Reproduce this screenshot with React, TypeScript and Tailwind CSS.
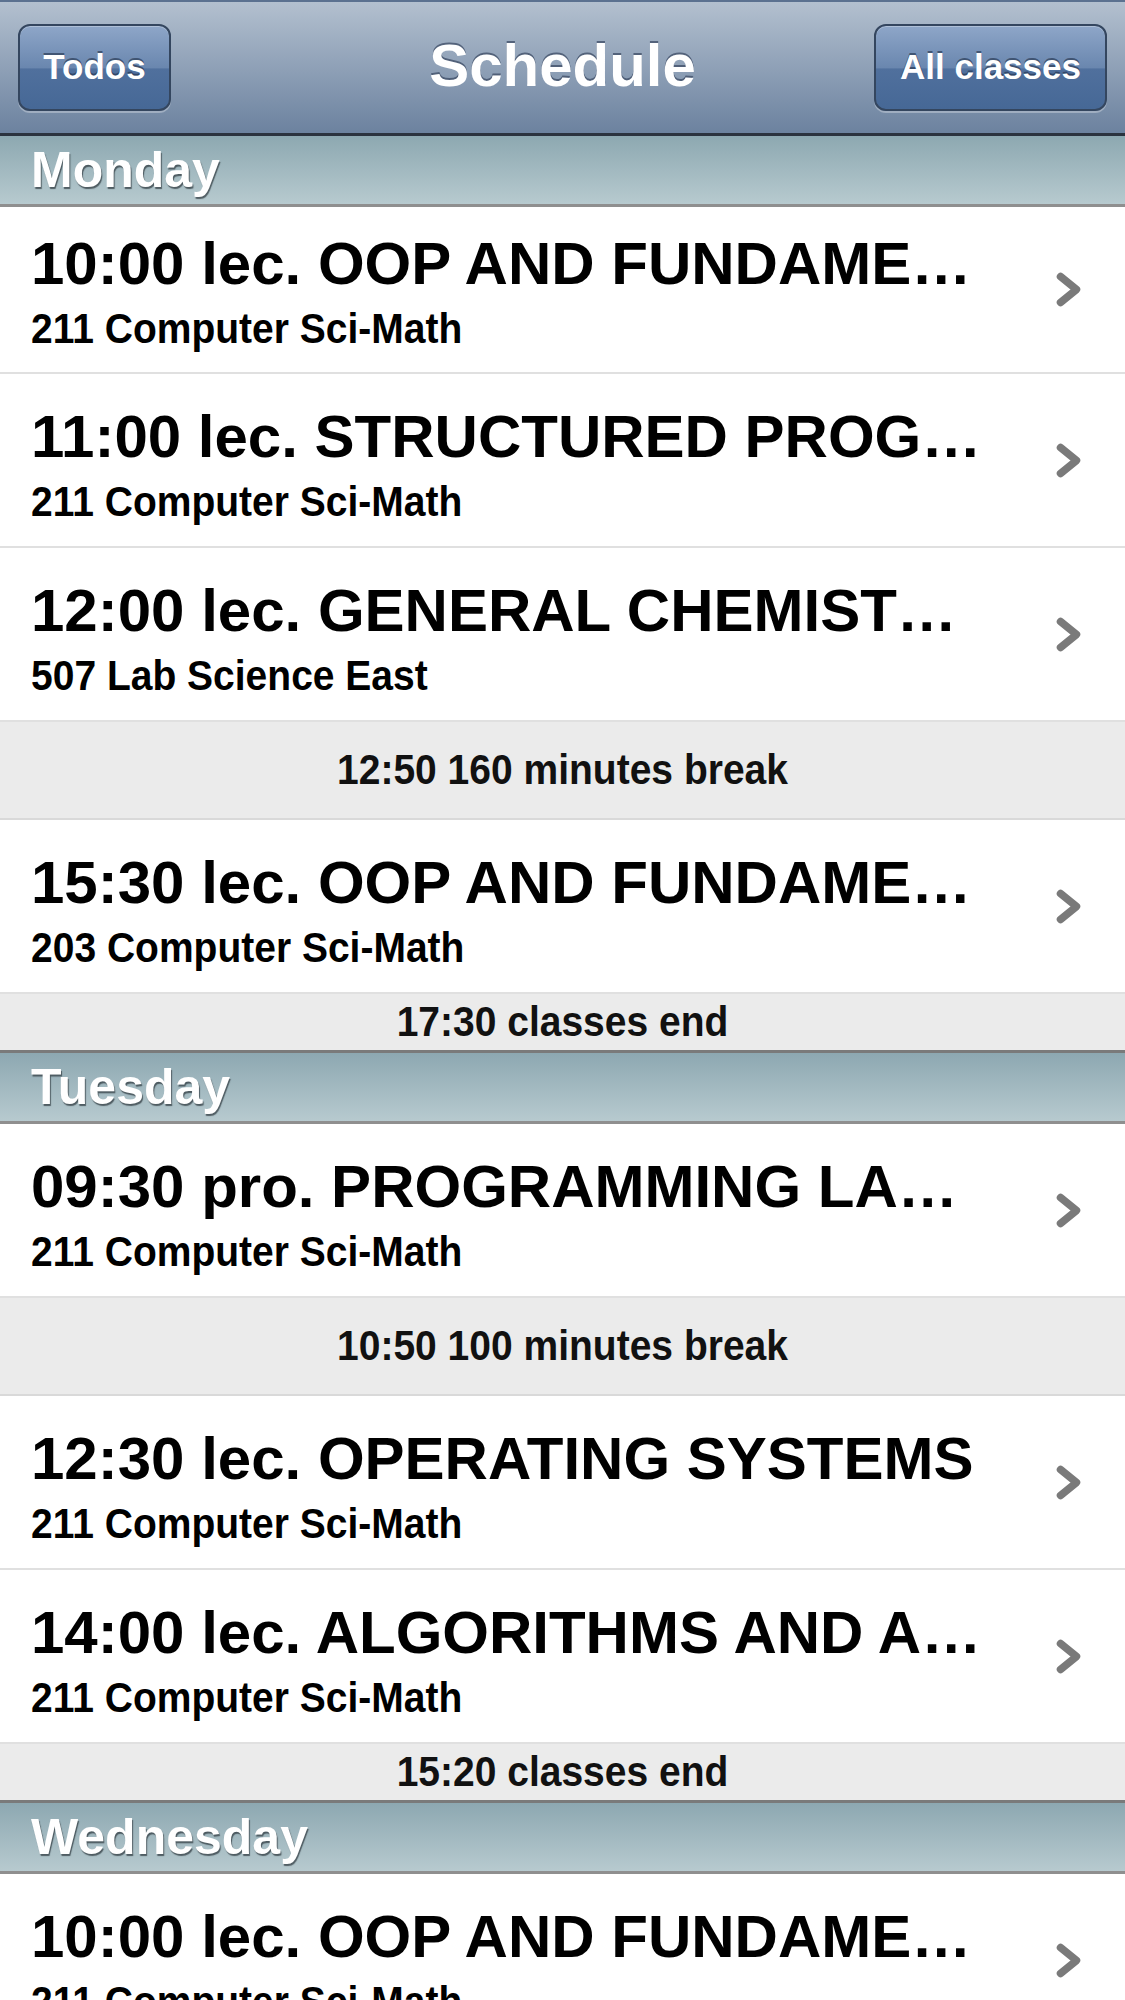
import React from "react";

type Item =
  | { kind: "class"; title: string; room: string }
  | { kind: "break"; text: string }
  | { kind: "end"; text: string };

type Day = { name: string; items: Item[] };

const days: Day[] = [
  {
    name: "Monday",
    items: [
      { kind: "class", title: "10:00 lec. OOP AND FUNDAMENTALS OF PROGRAMMING", room: "211 Computer Sci-Math" },
      { kind: "class", title: "11:00 lec. STRUCTURED PROGRAMMING", room: "211 Computer Sci-Math" },
      { kind: "class", title: "12:00 lec. GENERAL CHEMISTRY I", room: "507 Lab Science East" },
      { kind: "break", text: "12:50 160 minutes break" },
      { kind: "class", title: "15:30 lec. OOP AND FUNDAMENTALS OF PROGRAMMING", room: "203 Computer Sci-Math" },
      { kind: "end", text: "17:30 classes end" },
    ],
  },
  {
    name: "Tuesday",
    items: [
      { kind: "class", title: "09:30 pro. PROGRAMMING LANGUAGES", room: "211 Computer Sci-Math" },
      { kind: "break", text: "10:50 100 minutes break" },
      { kind: "class", title: "12:30 lec. OPERATING SYSTEMS", room: "211 Computer Sci-Math" },
      { kind: "class", title: "14:00 lec. ALGORITHMS AND ANALYSIS", room: "211 Computer Sci-Math" },
      { kind: "end", text: "15:20 classes end" },
    ],
  },
  {
    name: "Wednesday",
    items: [
      { kind: "class", title: "10:00 lec. OOP AND FUNDAMENTALS OF PROGRAMMING", room: "211 Computer Sci-Math" },
      { kind: "class", title: "11:00 lec. STRUCTURED PROGRAMMING", room: "211 Computer Sci-Math" },
    ],
  },
];

function Chevron() {
  return (
    <svg width="25" height="35" viewBox="0 0 25 35" className="mr-[44px] ml-auto shrink-0">
      <path
        d="M4.5 4.5 L20.5 17.5 L4.5 30.5"
        fill="none"
        stroke="#7a7a7a"
        strokeWidth="7.5"
        strokeLinecap="round"
        strokeLinejoin="round"
      />
    </svg>
  );
}

function NavButton({ label, width }: { label: string; width: string }) {
  return (
    <button
      className={`${width} flex h-[87px] items-center justify-center rounded-[12px] border-2 border-[#34465f] bg-[linear-gradient(#8ea6c8,#6a87af_50%,#50709d_52%,#466896)] text-[35px] font-bold text-white shadow-[inset_0_1px_0_rgba(255,255,255,0.3),0_2px_0_rgba(255,255,255,0.3)] [text-shadow:0_-2px_0_rgba(30,45,70,0.6)]`}
    >
      {label}
    </button>
  );
}

function Header({ name, first }: { name: string; first: boolean }) {
  return (
    <div
      className={`${first ? "h-[71px]" : "h-[74px] border-t-[3px] border-t-[#7a7a7a]"} border-b-[3px] border-b-[#8f8f8f] bg-linear-to-b from-[#8da8b1] to-[#b7cacf] pl-[31px] text-[50px] leading-[68px] font-bold text-white [text-shadow:1px_2px_1px_rgba(40,50,55,0.7)]`}
    >
      {name}
    </div>
  );
}

function ClassRow({ title, room, first }: { title: string; room: string; first: boolean }) {
  return (
    <div className={`${first ? "h-[167px]" : "h-[174px]"} flex items-center border-b-2 border-[#e0e0e0] bg-white pl-[31px]`}>
      <div className={`${first ? "pt-[22px]" : "pt-[28px]"} w-[962px] min-w-0 self-start`}>
        <div className="truncate text-[60px] leading-[70px] font-bold text-black">{title}</div>
        <div className="mt-[9px] origin-[0_35px] scale-y-[1.1] truncate text-[39px] leading-[44px] font-bold text-black">
          {room}
        </div>
      </div>
      <Chevron />
    </div>
  );
}

export default function App() {
  return (
    <div className="h-[2000px] w-[1125px] overflow-hidden bg-white font-['Liberation_Sans',Arial,Helvetica,sans-serif]">
      {/* top bar */}
      <div className="grid h-[136px] grid-cols-[1fr_auto_1fr] items-center border-t-2 border-b-[3px] border-t-[#5b7190] border-b-[#2b333f] bg-linear-to-b from-[#b3c0cf] to-[#6c829f] px-[18px]">
        <div className="justify-self-start">
          <NavButton label="Todos" width="w-[153px]" />
        </div>
        <h1 className="-mt-[4px] text-[60px] font-bold text-white [text-shadow:0_-2px_0_rgba(60,75,100,0.75)]">
          Schedule
        </h1>
        <div className="justify-self-end">
          <NavButton label="All classes" width="w-[233px]" />
        </div>
      </div>

      {days.map((day, di) => (
        <div key={day.name}>
          <Header name={day.name} first={di === 0} />
          {day.items.map((item, i) => {
            if (item.kind === "class") {
              return <ClassRow key={i} title={item.title} room={item.room} first={di === 0 && i === 0} />;
            }
            if (item.kind === "break") {
              return (
                <div
                  key={i}
                  className="flex h-[98px] items-center justify-center border-b-2 border-[#d9d9d9] bg-[#ebebeb] text-[#111]"
                >
                  <span className="scale-y-[1.1] text-[39px] font-bold">{item.text}</span>
                </div>
              );
            }
            return (
              <div key={i} className="flex h-[56px] items-center justify-center bg-[#ebebeb] text-[#111]">
                <span className="scale-y-[1.1] text-[39px] font-bold">{item.text}</span>
              </div>
            );
          })}
        </div>
      ))}
    </div>
  );
}
